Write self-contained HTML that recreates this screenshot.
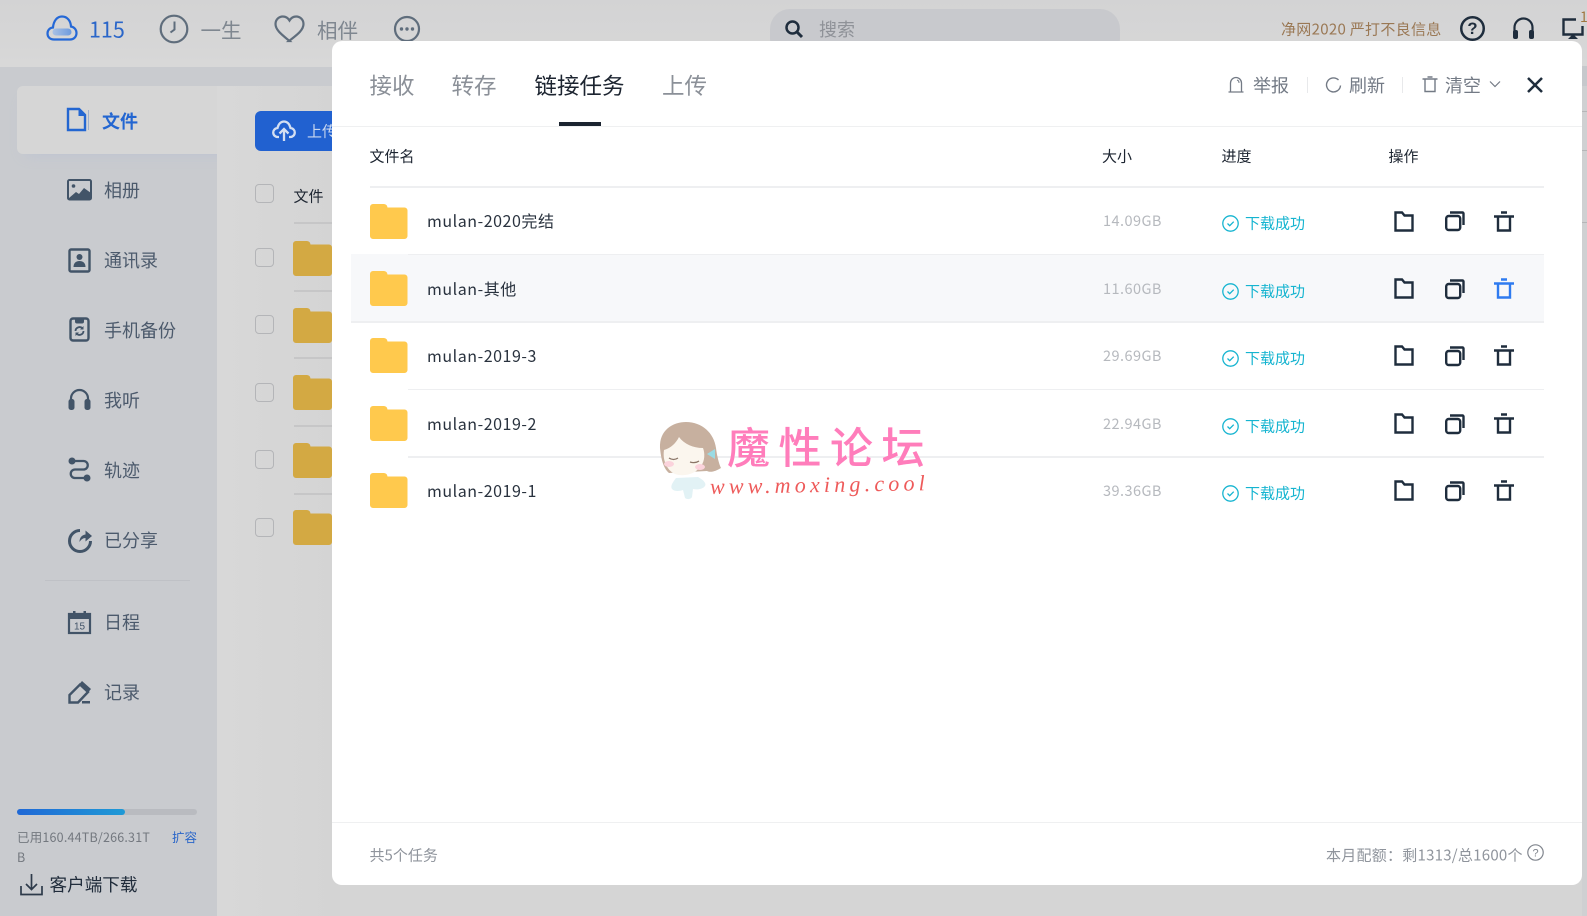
<!DOCTYPE html>
<html lang="zh-CN"><head><meta charset="utf-8"><title>文件</title>
<style>
html,body{margin:0;padding:0}
body{width:1587px;height:916px;overflow:hidden;position:relative;background:#d5d5d5;font-family:"Noto Sans CJK SC","Liberation Sans",sans-serif}
.a,.t,svg{position:absolute}
.t{white-space:nowrap;line-height:1;transform:translateY(-50%)}
svg{overflow:visible}
.s{left:104px;font-size:18px;color:#4c5a6c}
.cb{position:absolute;left:255px;width:17px;height:17px;border:1.5px solid #b4b5b8;border-radius:4px}
.bf{left:292.5px;width:39px;height:35px}
.bl{position:absolute;left:293.5px;width:39px;height:1.5px;background:#c6c6c7}
.hd{font-size:15px;color:#1c2430;top:156px}
.nm{left:427px;font-size:16px;color:#29323e;letter-spacing:.55px}
.sz{left:1103px;font-size:14.5px;color:#b6b9be;letter-spacing:.45px}
.ok{left:1245px;font-size:15px;color:#15b4d0}
.ln{position:absolute;height:1.5px;background:#eeeff1;right:43px}
.g{fill:none;stroke:#1f2d3d;stroke-width:2.4}
.tb{font-size:22.5px;color:#8b9098;top:85px}
.ac{font-size:18px;color:#737a85;top:85px}
.sep{position:absolute;width:1px;height:16px;top:77px;background:#e8e9eb}
</style></head><body>

<!-- top bar -->
<div class="a" style="left:0;top:0;width:1587px;height:67px;background:linear-gradient(#d3d3d4,#d8d8d8)"></div>
<svg style="left:46px;top:14px" width="32" height="28" viewBox="0 0 32 28"><defs><linearGradient id="c1" x1="0" x2="1"><stop offset="0" stop-color="#a9c1e4"/><stop offset="1" stop-color="#6e9bde"/></linearGradient></defs><path d="M8 25.5C4 25.5 1.5 23 1.5 19.5c0-3.4 2.5-5.8 5.500-6C7.500 7 11 2.500 16 2.500c5.200 0 8.700 4.300 9 10 3.200.5 5.500 3.200 5.500 6.500 0 3.800-2.800 6.500-6.500 6.500z" fill="none" stroke="#2568d6" stroke-width="2.2"/><rect x="6.5" y="14.5" width="19" height="7" rx="3.5" fill="url(#c1)"/></svg>
<div class="t" style="left:89px;top:29px;font-size:21.5px;color:#2a66c9">115</div>
<svg style="left:159px;top:14px" width="30" height="30" viewBox="0 0 30 30"><circle cx="15" cy="15" r="13.3" fill="none" stroke="#5f6d7c" stroke-width="2.2"/><path d="M15.5 7.5v8l-4 3" fill="none" stroke="#5f6d7c" stroke-width="2"/></svg>
<div class="t" style="left:200.5px;top:29px;font-size:20.5px;color:#7f8790">一生</div>
<svg style="left:274px;top:15px" width="31" height="28" viewBox="0 0 31 28"><path d="M15.500 26C9 20.500 1.500 15.500 1.500 9 1.500 4.500 5 1.500 8.800 1.500c3 0 5.200 1.500 6.700 4 1.500-2.500 3.700-4 6.700-4 3.800 0 7.300 3 7.300 7.500 0 6.500-7.500 11.500-14.500 17z" fill="none" stroke="#5f6d7c" stroke-width="2.2"/></svg>
<div class="t" style="left:317px;top:29px;font-size:20.5px;color:#7f8790">相伴</div>
<svg style="left:394px;top:16px" width="26" height="26" viewBox="0 0 26 26"><circle cx="13" cy="13" r="12" fill="none" stroke="#5f6d7c" stroke-width="2.2"/><circle cx="7.5" cy="13" r="1.7" fill="#5f6d7c"/><circle cx="13" cy="13" r="1.7" fill="#5f6d7c"/><circle cx="18.5" cy="13" r="1.7" fill="#5f6d7c"/></svg>

<div class="a" style="left:770px;top:9px;width:350px;height:50px;border-radius:20px;background:#c8c9cd"></div>
<svg style="left:784px;top:19px" width="21" height="21" viewBox="0 0 21 21"><circle cx="8.500" cy="8.500" r="6" fill="none" stroke="#1f2d3d" stroke-width="2.5"/><path d="M13 13l5 5" stroke="#1f2d3d" stroke-width="3"/></svg>
<div class="t" style="left:819px;top:29px;font-size:18px;color:#8f9298">搜索</div>

<div class="t" style="left:1281px;top:29px;font-size:15px;letter-spacing:.3px;color:#9a7854">净网2020 严打不良信息</div>
<svg style="left:1460px;top:16px" width="25" height="25" viewBox="0 0 24 24"><circle cx="12" cy="12" r="10.8" fill="none" stroke="#1f2d3d" stroke-width="2.4"/><text x="12" y="17.500" font-size="16" font-weight="700" text-anchor="middle" fill="#1f2d3d" font-family="Liberation Sans,sans-serif">?</text></svg>
<svg style="left:1512px;top:17px" width="23" height="23" viewBox="0 0 23 23"><path d="M2.500 16v-5.500a9 9 0 0 1 18 0V16" fill="none" stroke="#1f2d3d" stroke-width="2.2"/><rect x="1" y="13" width="5" height="9" rx="2" fill="#1f2d3d"/><rect x="17" y="13" width="5" height="9" rx="2" fill="#1f2d3d"/></svg>
<svg style="left:1562px;top:18px" width="22" height="22" viewBox="0 0 22 22"><path d="M14 1.500H1.500v15h19V8" fill="none" stroke="#1f2d3d" stroke-width="2.4"/><path d="M11 16l5 5H6z" fill="#1f2d3d"/></svg>
<div class="t" style="left:1580px;top:17px;font-size:14px;color:#a0763f">1</div>

<!-- sidebar + content backgrounds -->
<div class="a" style="left:0;top:67px;width:340px;height:849px;background:#c9cbcf"></div>
<div class="a" style="left:17px;top:86px;width:320px;height:68px;border-radius:6px 0 0 6px;background:#d6d6d6;box-shadow:0 8px 14px -8px #bcc3d2"></div>
<div class="a" style="left:217px;top:86px;width:123px;height:830px;background:linear-gradient(90deg,#d8d8d8,#d4d4d4)"></div>

<svg style="left:66px;top:107px" width="24" height="25" viewBox="0 0 24 25"><path d="M2 2h11l6 6v15H2z" fill="none" stroke="#2366d1" stroke-width="2.4"/><path d="M12.500 1.500h1.500l6 6v1.500h-7.500z" fill="#2366d1"/><path d="M22.500 3v20" stroke="#9fb0cc" stroke-width="1"/></svg>
<div class="t" style="left:102px;top:121px;font-size:18px;font-weight:700;color:#2366d1">文件</div>

<svg style="left:67px;top:178px" width="25" height="25" viewBox="0 0 25 25"><rect x="1" y="2" width="23" height="19.5" rx="1.5" fill="none" stroke="#425468" stroke-width="2"/><circle cx="6.500" cy="8" r="1.8" fill="#425468"/><path d="M2 20l7-6 3 2 5-6 7 5v6H2z" fill="#425468"/></svg>
<div class="t s" style="top:190.300px">相册</div>
<svg style="left:68px;top:248px" width="23" height="25" viewBox="0 0 23 25"><rect x="1.500" y="1.500" width="20" height="22" rx="1.5" fill="none" stroke="#425468" stroke-width="2.4"/><circle cx="11.500" cy="9" r="3" fill="#425468"/><path d="M5.500 19c0-4 2.500-6 6-6s6 2 6 6z" fill="#425468"/></svg>
<div class="t s" style="top:260px">通讯录</div>
<svg style="left:69px;top:317px" width="21" height="25" viewBox="0 0 21 25"><rect x="1.500" y="1.500" width="18" height="22" rx="2.5" fill="none" stroke="#425468" stroke-width="2.4"/><path d="M6 1.500h9v3a2 2 0 0 1-2 2H8a2 2 0 0 1-2-2z" fill="#425468"/><path d="M6.500 14a4 4 0 0 1 7-2.500M14.500 14a4 4 0 0 1-7 2.500" fill="none" stroke="#425468" stroke-width="1.8"/><path d="M14.500 9v3.500H11zM6.500 19v-3.500H10z" fill="#425468"/></svg>
<div class="t s" style="top:330px">手机备份</div>
<svg style="left:68px;top:388px" width="23" height="23" viewBox="0 0 23 23"><path d="M3 15V10.500a8.500 8.500 0 0 1 17 0V15" fill="none" stroke="#425468" stroke-width="2.2"/><rect x=".5" y="11" width="6" height="11" rx="2.5" fill="#425468"/><rect x="16.500" y="11" width="6" height="11" rx="2.5" fill="#425468"/></svg>
<div class="t s" style="top:400px">我听</div>
<svg style="left:68px;top:457px" width="23" height="25" viewBox="0 0 23 25"><path d="M3 4h12.500a4 4 0 0 1 0 8.500H7a4 4 0 0 0 0 8.500h10" fill="none" stroke="#425468" stroke-width="2.3"/><circle cx="4" cy="4" r="3.5" fill="#425468"/><circle cx="19" cy="21" r="3.500" fill="#425468"/></svg>
<div class="t s" style="top:470px">轨迹</div>
<svg style="left:67px;top:527px" width="26" height="26" viewBox="0 0 26 26"><path d="M13 3.500A10.500 10.500 0 1 0 23.500 14" fill="none" stroke="#425468" stroke-width="3"/><path d="M12.500 15c0-4.500 2.500-7 6-7.500V3.500l6.500 5.500-6.500 5.500v-3.500c-2.500 0-4.500 1.500-6 4z" fill="#425468"/></svg>
<div class="t s" style="top:540px">已分享</div>
<div class="a" style="left:45px;top:580px;width:145px;height:1px;background:#bfc1c6"></div>
<svg style="left:68px;top:611px" width="23" height="23" viewBox="0 0 23 23"><rect x="1" y="3" width="21" height="19" fill="none" stroke="#425468" stroke-width="2.2"/><rect x="1" y="3" width="21" height="5" fill="#425468"/><rect x="5" y="0" width="2.5" height="4" fill="#425468"/><rect x="15.500" y="0" width="2.5" height="4" fill="#425468"/><text x="11.500" y="18.500" font-size="10" text-anchor="middle" fill="#425468" font-family="Liberation Sans,sans-serif">15</text></svg>
<div class="t s" style="top:622.300px">日程</div>
<svg style="left:68px;top:680px" width="24" height="24" viewBox="0 0 24 24"><path d="M1.500 22.500V15L12 4.500l8 7.500L10 22.500z" fill="none" stroke="#425468" stroke-width="2.4"/><path d="M14 1l9 8-3 3.500-9-8z" fill="#425468"/><rect x="14" y="21" width="8" height="2.5" fill="#425468"/></svg>
<div class="t s" style="top:692.300px">记录</div>

<div class="a" style="left:17px;top:809px;width:180px;height:6px;border-radius:3px;background:#b9bbc0"></div>
<div class="a" style="left:17px;top:809px;width:108px;height:6px;border-radius:3px;background:linear-gradient(90deg,#1f68d6,#1f9ad6)"></div>
<div class="t" style="left:17px;top:836.500px;font-size:12.5px;letter-spacing:.2px;color:#73787f">已用160.44TB/266.31T</div>
<div class="t" style="left:172px;top:836.500px;font-size:12.5px;color:#2a66c9">扩容</div>
<div class="t" style="left:17px;top:856.500px;font-size:12.5px;color:#73787f">B</div>
<svg style="left:20px;top:873px" width="23" height="23" viewBox="0 0 23 23"><path d="M1 13v8.500h21V13M11.500 1v15M6 11l5.500 5.500L17 11" fill="none" stroke="#2d3a4a" stroke-width="1.7"/></svg>
<div class="t" style="left:49.500px;top:885px;font-size:17.6px;color:#202c3b">客户端下载</div>

<!-- content behind -->
<div class="a" style="left:255px;top:111px;width:85px;height:40px;border-radius:6px;background:#2161d0"></div>
<svg style="left:272px;top:120px" width="24" height="22" viewBox="0 0 24 22"><path d="M7 17H6a4.500 4.500 0 0 1-.5-9C6.500 4 9 1.500 12 1.500S17.500 4 18.500 8a4.500 4.500 0 0 1-.5 9h-1" fill="none" stroke="#d4dff2" stroke-width="2.3"/><path d="M12 21V9M7.500 13.500L12 9l4.500 4.500" fill="none" stroke="#d4dff2" stroke-width="2.3"/></svg>
<div class="t" style="left:307px;top:131px;font-size:15px;color:#c9d7ef">上传</div>
<div class="cb" style="top:184px"></div>
<div class="t" style="left:293.5px;top:195.500px;font-size:15px;color:#1f2733">文件</div>
<div class="bl" style="top:222px"></div>
<div class="cb" style="top:248px"></div><div class="cb" style="top:315px"></div><div class="cb" style="top:383px"></div><div class="cb" style="top:450px"></div><div class="cb" style="top:518px"></div>
<svg class="bf" style="top:241px" viewBox="0 0 39 35"><path d="M3 0h11a4 4 0 0 1 3.500 3.500H36a3 3 0 0 1 3 3V32a3 3 0 0 1-3 3H3a3 3 0 0 1-3-3V3a3 3 0 0 1 3-3z" fill="#d3a943"/></svg>
<div class="bl" style="top:290px"></div>
<svg class="bf" style="top:308px" viewBox="0 0 39 35"><path d="M3 0h11a4 4 0 0 1 3.500 3.500H36a3 3 0 0 1 3 3V32a3 3 0 0 1-3 3H3a3 3 0 0 1-3-3V3a3 3 0 0 1 3-3z" fill="#d3a943"/></svg>
<div class="bl" style="top:357px"></div>
<svg class="bf" style="top:375px" viewBox="0 0 39 35"><path d="M3 0h11a4 4 0 0 1 3.500 3.500H36a3 3 0 0 1 3 3V32a3 3 0 0 1-3 3H3a3 3 0 0 1-3-3V3a3 3 0 0 1 3-3z" fill="#d3a943"/></svg>
<div class="bl" style="top:425px"></div>
<svg class="bf" style="top:443px" viewBox="0 0 39 35"><path d="M3 0h11a4 4 0 0 1 3.500 3.500H36a3 3 0 0 1 3 3V32a3 3 0 0 1-3 3H3a3 3 0 0 1-3-3V3a3 3 0 0 1 3-3z" fill="#d3a943"/></svg>
<div class="bl" style="top:493px"></div>
<svg class="bf" style="top:510px" viewBox="0 0 39 35"><path d="M3 0h11a4 4 0 0 1 3.500 3.500H36a3 3 0 0 1 3 3V32a3 3 0 0 1-3 3H3a3 3 0 0 1-3-3V3a3 3 0 0 1 3-3z" fill="#d3a943"/></svg>

<!-- right strip lines -->
<div class="a" style="left:1582px;top:66px;width:5px;height:850px;background:#cfd0d2"></div>
<div class="a" style="left:1582px;top:66px;width:5px;height:20px;background:#c6c8cc"></div>
<div class="a" style="left:1582px;top:111px;width:5px;height:1px;background:#b5b6b8"></div>
<div class="a" style="left:1582px;top:150px;width:5px;height:1px;background:#b5b6b8"></div>
<div class="a" style="left:1582px;top:222px;width:5px;height:1px;background:#b5b6b8"></div>

<!-- modal -->
<div class="a" style="left:332px;top:41px;width:1250px;height:844px;background:#fff;border-radius:10px"></div>
<div class="a" style="left:332px;top:125.500px;width:1250px;height:1.5px;background:#eff0f1"></div>
<div class="t tb" style="left:369.5px">接收</div>
<div class="t tb" style="left:451.5px">转存</div>
<div class="t tb" style="left:534.5px;color:#1c2430">链接任务</div>
<div class="t tb" style="left:662px">上传</div>
<div class="a" style="left:558.5px;top:122px;width:42.5px;height:3.5px;background:#1c2430"></div>

<svg style="left:1228px;top:76px" width="16" height="17" viewBox="0 0 16 17"><path d="M.5 16h15M2.500 16V7a5.500 5.500 0 0 1 11 0v9" fill="none" stroke="#737a85" stroke-width="1.3"/><path d="M9 4a3 3 0 0 1 2 3" fill="none" stroke="#737a85" stroke-width="1"/></svg>
<div class="t ac" style="left:1253px">举报</div>
<div class="sep" style="left:1306.5px"></div>
<svg style="left:1325px;top:77px" width="17" height="17" viewBox="0 0 17 17"><path d="M13.500 3A7 7 0 1 0 15.500 8.500" fill="none" stroke="#737a85" stroke-width="1.4"/></svg>
<div class="t ac" style="left:1349px">刷新</div>
<div class="sep" style="left:1402px"></div>
<svg style="left:1422px;top:76px" width="16" height="17" viewBox="0 0 16 17"><path d="M.5 3h15M5.500 1h5M3 3v12.500h10V3" fill="none" stroke="#737a85" stroke-width="1.4"/></svg>
<div class="t ac" style="left:1445px">清空</div>
<svg style="left:1489px;top:80px" width="12" height="8" viewBox="0 0 12 8"><path d="M1 1.500l5 5 5-5" fill="none" stroke="#737a85" stroke-width="1.2"/></svg>
<svg style="left:1527px;top:77px" width="16" height="16" viewBox="0 0 16 16"><path d="M1 1l14 14M15 1L1 15" stroke="#1f2d3d" stroke-width="2.5"/></svg>

<div class="t hd" style="left:369.5px">文件名</div>
<div class="t hd" style="left:1102px">大小</div>
<div class="t hd" style="left:1221.5px">进度</div>
<div class="t hd" style="left:1388.5px">操作</div>

<div class="a" style="left:351px;top:254px;width:1193px;height:67.5px;background:#f7f8fa"></div>
<div class="ln" style="left:369.5px;top:186px"></div>
<div class="ln" style="left:408px;top:253.500px"></div>
<div class="ln" style="left:351px;top:321px"></div>
<div class="ln" style="left:408px;top:388.500px"></div>
<div class="ln" style="left:408px;top:456px"></div>

<!-- rows -->
<svg class="a" style="left:369.5px;top:203.500px" width="37.5" height="35" viewBox="0 0 37.5 35"><path d="M3 0h11a4 4 0 0 1 3.500 3.500H34.500a3 3 0 0 1 3 3V32a3 3 0 0 1-3 3H3a3 3 0 0 1-3-3V3a3 3 0 0 1 3-3z" fill="#ffc94d"/></svg>
<div class="t nm" style="top:220.300px">mulan-2020完结</div>
<div class="t sz" style="top:220.500px">14.09GB</div>
<svg style="left:1222px;top:215px" width="17" height="17" viewBox="0 0 17 17"><circle cx="8.500" cy="8.500" r="7.700" fill="none" stroke="#15b4d0" stroke-width="1.3"/><path d="M5.500 8.500l2.200 2.200 4-4" fill="none" stroke="#15b4d0" stroke-width="1.3"/></svg>
<div class="t ok" style="top:223px">下载成功</div>
<svg style="left:1394px;top:210.500px" width="20" height="21" viewBox="0 0 20 21"><path class="g" d="M1.500 1.500h6.500l2.500 3h8v15h-17z"/></svg>
<svg style="left:1444.500px;top:211px" width="20" height="20" viewBox="0 0 20 20"><rect class="g" x="1.200" y="5" width="14" height="14" rx="2.5"/><path class="g" d="M5 1.500h12.500a1 1 0 0 1 1 1V14"/></svg>
<svg style="left:1494px;top:210.500px" width="20" height="21" viewBox="0 0 20 21"><path class="g" d="M0 5.500h20M7 1.500h6M4 5.500V19.500h12V5.500"/></svg>

<svg class="a" style="left:369.5px;top:271px" width="37.5" height="35" viewBox="0 0 37.5 35"><path d="M3 0h11a4 4 0 0 1 3.500 3.500H34.500a3 3 0 0 1 3 3V32a3 3 0 0 1-3 3H3a3 3 0 0 1-3-3V3a3 3 0 0 1 3-3z" fill="#ffc94d"/></svg>
<div class="t nm" style="top:288.300px">mulan-其他</div>
<div class="t sz" style="top:288.500px">11.60GB</div>
<svg style="left:1222px;top:283px" width="17" height="17" viewBox="0 0 17 17"><circle cx="8.500" cy="8.500" r="7.700" fill="none" stroke="#15b4d0" stroke-width="1.3"/><path d="M5.500 8.500l2.200 2.200 4-4" fill="none" stroke="#15b4d0" stroke-width="1.3"/></svg>
<div class="t ok" style="top:291px">下载成功</div>
<svg style="left:1394px;top:278px" width="20" height="21" viewBox="0 0 20 21"><path class="g" d="M1.500 1.500h6.500l2.500 3h8v15h-17z"/></svg>
<svg style="left:1444.500px;top:279px" width="20" height="20" viewBox="0 0 20 20"><rect class="g" x="1.200" y="5" width="14" height="14" rx="2.5"/><path class="g" d="M5 1.500h12.500a1 1 0 0 1 1 1V14"/></svg>
<svg style="left:1494px;top:278px" width="20" height="21" viewBox="0 0 20 21"><path class="g" style="stroke:#2f7bf0" d="M0 5.500h20M7 1.500h6M4 5.500V19.500h12V5.500"/></svg>

<svg class="a" style="left:369.5px;top:338px" width="37.5" height="35" viewBox="0 0 37.5 35"><path d="M3 0h11a4 4 0 0 1 3.500 3.500H34.500a3 3 0 0 1 3 3V32a3 3 0 0 1-3 3H3a3 3 0 0 1-3-3V3a3 3 0 0 1 3-3z" fill="#ffc94d"/></svg>
<div class="t nm" style="top:355.300px">mulan-2019-3</div>
<div class="t sz" style="top:355.500px">29.69GB</div>
<svg style="left:1222px;top:350px" width="17" height="17" viewBox="0 0 17 17"><circle cx="8.500" cy="8.500" r="7.700" fill="none" stroke="#15b4d0" stroke-width="1.3"/><path d="M5.500 8.500l2.200 2.200 4-4" fill="none" stroke="#15b4d0" stroke-width="1.3"/></svg>
<div class="t ok" style="top:358px">下载成功</div>
<svg style="left:1394px;top:345px" width="20" height="21" viewBox="0 0 20 21"><path class="g" d="M1.500 1.500h6.500l2.500 3h8v15h-17z"/></svg>
<svg style="left:1444.500px;top:346px" width="20" height="20" viewBox="0 0 20 20"><rect class="g" x="1.200" y="5" width="14" height="14" rx="2.5"/><path class="g" d="M5 1.500h12.500a1 1 0 0 1 1 1V14"/></svg>
<svg style="left:1494px;top:345px" width="20" height="21" viewBox="0 0 20 21"><path class="g" d="M0 5.500h20M7 1.500h6M4 5.500V19.500h12V5.500"/></svg>

<svg class="a" style="left:369.5px;top:406px" width="37.5" height="35" viewBox="0 0 37.5 35"><path d="M3 0h11a4 4 0 0 1 3.500 3.500H34.500a3 3 0 0 1 3 3V32a3 3 0 0 1-3 3H3a3 3 0 0 1-3-3V3a3 3 0 0 1 3-3z" fill="#ffc94d"/></svg>
<div class="t nm" style="top:423.300px">mulan-2019-2</div>
<div class="t sz" style="top:423.500px">22.94GB</div>
<svg style="left:1222px;top:418px" width="17" height="17" viewBox="0 0 17 17"><circle cx="8.500" cy="8.500" r="7.700" fill="none" stroke="#15b4d0" stroke-width="1.3"/><path d="M5.500 8.500l2.200 2.200 4-4" fill="none" stroke="#15b4d0" stroke-width="1.3"/></svg>
<div class="t ok" style="top:426px">下载成功</div>
<svg style="left:1394px;top:413px" width="20" height="21" viewBox="0 0 20 21"><path class="g" d="M1.500 1.500h6.500l2.500 3h8v15h-17z"/></svg>
<svg style="left:1444.500px;top:414px" width="20" height="20" viewBox="0 0 20 20"><rect class="g" x="1.200" y="5" width="14" height="14" rx="2.5"/><path class="g" d="M5 1.500h12.500a1 1 0 0 1 1 1V14"/></svg>
<svg style="left:1494px;top:413px" width="20" height="21" viewBox="0 0 20 21"><path class="g" d="M0 5.500h20M7 1.500h6M4 5.500V19.500h12V5.500"/></svg>

<svg class="a" style="left:369.5px;top:473px" width="37.5" height="35" viewBox="0 0 37.5 35"><path d="M3 0h11a4 4 0 0 1 3.500 3.500H34.500a3 3 0 0 1 3 3V32a3 3 0 0 1-3 3H3a3 3 0 0 1-3-3V3a3 3 0 0 1 3-3z" fill="#ffc94d"/></svg>
<div class="t nm" style="top:490.300px">mulan-2019-1</div>
<div class="t sz" style="top:490.500px">39.36GB</div>
<svg style="left:1222px;top:485px" width="17" height="17" viewBox="0 0 17 17"><circle cx="8.500" cy="8.500" r="7.700" fill="none" stroke="#15b4d0" stroke-width="1.3"/><path d="M5.500 8.500l2.200 2.200 4-4" fill="none" stroke="#15b4d0" stroke-width="1.3"/></svg>
<div class="t ok" style="top:493px">下载成功</div>
<svg style="left:1394px;top:480px" width="20" height="21" viewBox="0 0 20 21"><path class="g" d="M1.500 1.500h6.500l2.500 3h8v15h-17z"/></svg>
<svg style="left:1444.500px;top:481px" width="20" height="20" viewBox="0 0 20 20"><rect class="g" x="1.200" y="5" width="14" height="14" rx="2.5"/><path class="g" d="M5 1.500h12.500a1 1 0 0 1 1 1V14"/></svg>
<svg style="left:1494px;top:480px" width="20" height="21" viewBox="0 0 20 21"><path class="g" d="M0 5.500h20M7 1.500h6M4 5.500V19.500h12V5.500"/></svg>

<!-- watermark -->
<svg style="left:656px;top:420px" width="68" height="82" viewBox="0 0 68 82"><path d="M20 58c-3 4-6 8-4 11 3 3 8 2 11 1l2 8c3 2 6 1 7-1l1-8c5 1 10 0 12-3s-3-7-7-9z" fill="#e2f2f5"/><path d="M4 28C3 10 17 2 30 2c16 0 28 11 30 26 1 8 3 16 5 20-5 3-10 5-14 3l-38 2C7 48 5 38 4 28z" fill="#c7b09f"/><path d="M8 30c7-2 12-7 15-13 5 7 14 11 24 11 2 5 2 13-2 18-5 7-13 10-22 9C13 54 6 42 8 30z" fill="#fbf6ee"/><path d="M13 38c3 2 6 2 9 0M34 42c3 1 6 1 9-1" fill="none" stroke="#8a7567" stroke-width="1.3"/><ellipse cx="13" cy="44" rx="5" ry="3" fill="#fbd3dc"/><ellipse cx="44" cy="47" rx="5" ry="3" fill="#fbd3dc"/><path d="M51 34l8-5v10z" fill="#9adbe4"/></svg>
<div class="t" style="left:727px;top:446px;font-size:43px;font-weight:500;letter-spacing:8.5px;color:#ff7dbb;font-family:'WenQuanYi Zen Hei','Noto Sans CJK SC',sans-serif">魔性论坛</div>
<div class="t" style="left:710px;top:487px;font-size:22px;letter-spacing:4.2px;font-style:italic;color:#ee5a5a;font-family:'Liberation Serif',serif;transform:translateY(-50%) rotate(-1deg);transform-origin:left center">www.moxing.cool</div>

<!-- footer -->
<div class="a" style="left:332px;top:821.500px;width:1250px;height:1.5px;background:#eff0f1"></div>
<div class="t" style="left:369.5px;top:855px;font-size:15px;color:#8f949c">共5个任务</div>
<div class="t" style="left:1326px;top:855px;font-size:15px;letter-spacing:.25px;color:#8f949c">本月配额：剩1313/总1600个</div>
<svg style="left:1527px;top:844px" width="17" height="17" viewBox="0 0 17 17"><circle cx="8.500" cy="8.500" r="7.700" fill="none" stroke="#80858d" stroke-width="1.2"/><text x="8.500" y="12.500" font-size="11" text-anchor="middle" fill="#80858d" font-family="Liberation Sans,sans-serif">?</text></svg>
</body></html>
